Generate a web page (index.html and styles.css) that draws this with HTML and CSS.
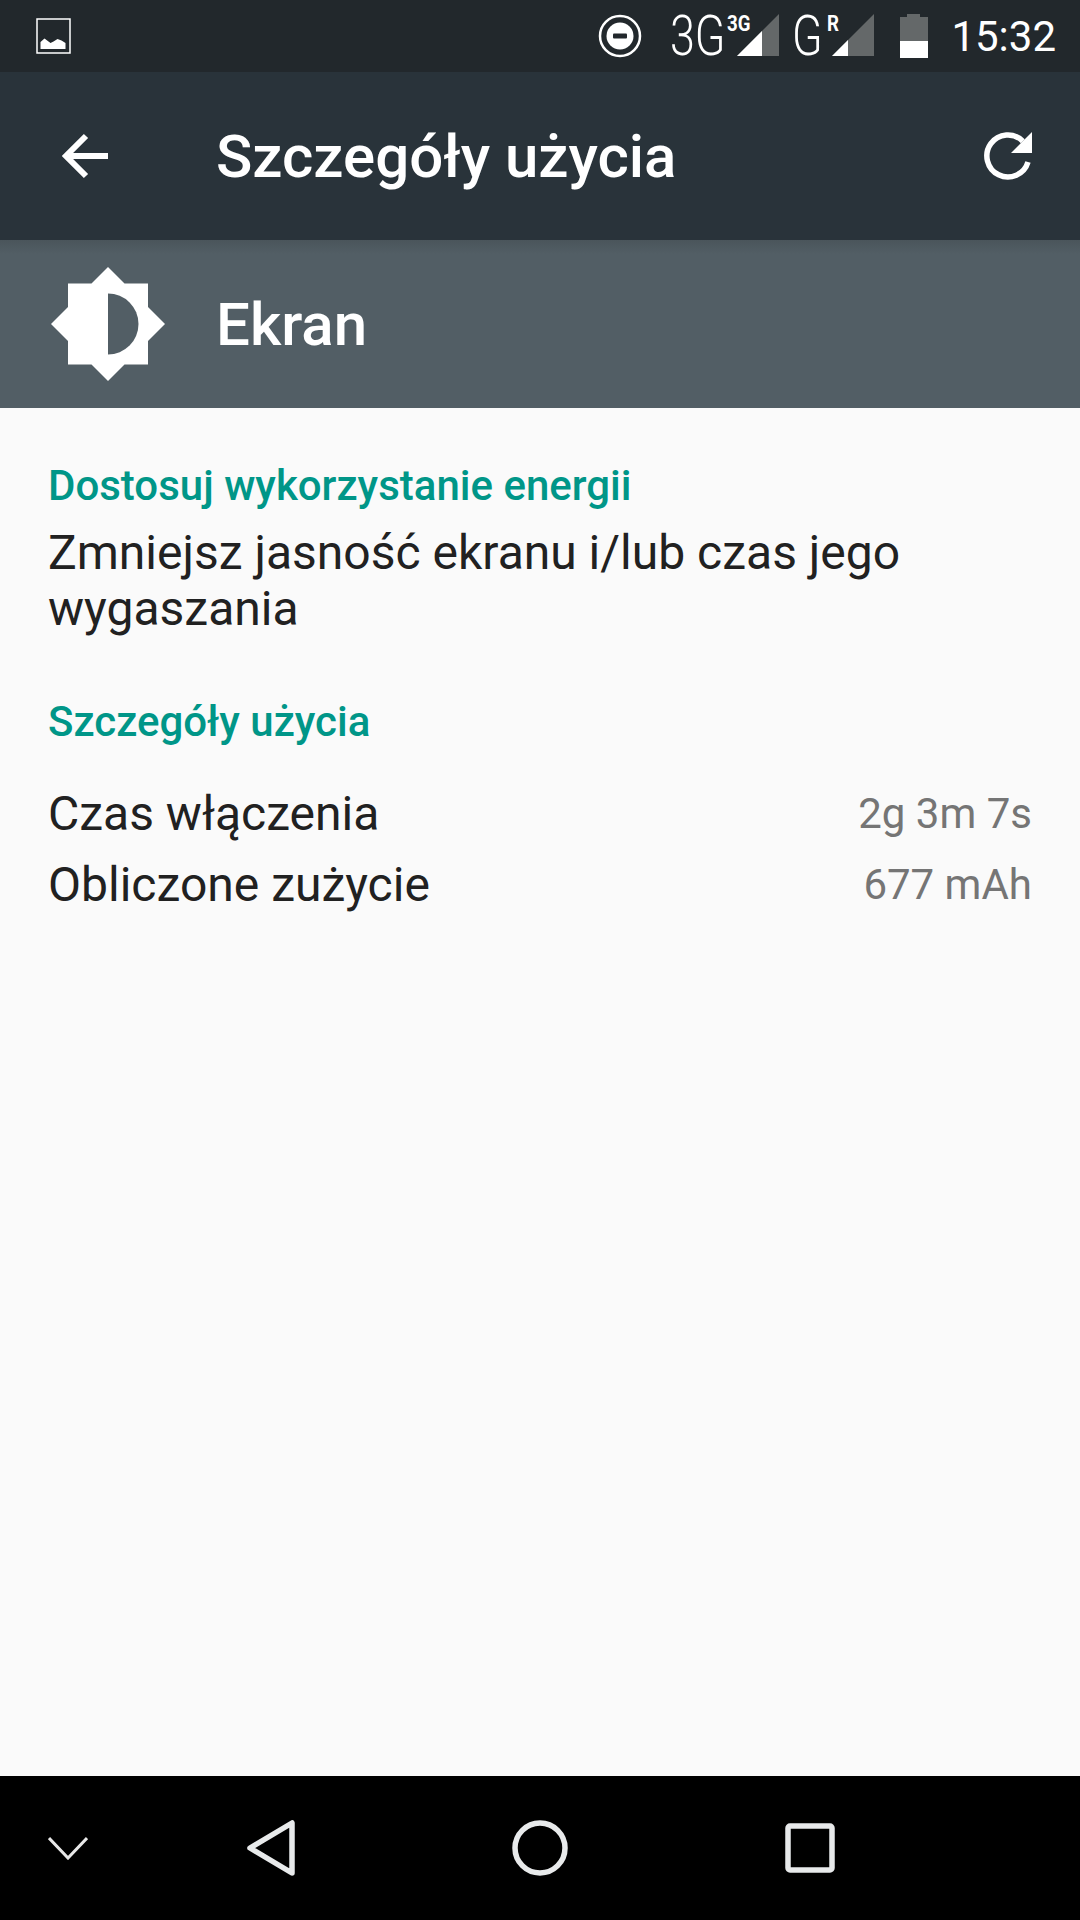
FILE: index.html
```html
<!DOCTYPE html>
<html lang="pl">
<head>
    <meta charset="UTF-8">
    <meta name="viewport" content="width=device-width, initial-scale=1.0">
    <title>Szczegóły użycia</title>
    <link rel="stylesheet" href="styles.css">
</head>
<body>
    <div class="screen">
        <div class="statusbar">
            <svg class="st-image" width="36" height="36" viewBox="0 0 36 36">
                <path d="M1 1h33v34H1z" fill="none" stroke="#fff" stroke-width="1.5"/>
                <path d="M4.500 31V24l4-3.500 6 4.500 3-1.500 4-2.500 4 1.500 4 2.500V31z" fill="#fff"/>
            </svg>
            <div class="st-right">
                <svg class="st-dnd" width="44" height="44" viewBox="0 0 44 44">
                    <circle cx="22" cy="22" r="20" fill="none" stroke="#fff" stroke-width="2.500"/>
                    <circle cx="22" cy="22" r="13.500" fill="#fff"/>
                    <rect x="15" y="19.500" width="14" height="5" rx="1" fill="#22282c"/>
                </svg>
                <span class="net-big net-3g">3G</span>
                <span class="net-small net-small-3g">3G</span>
                <svg class="st-signal st-signal-3g" width="42" height="42" viewBox="0 0 42 42">
                    <path d="M42 0v42H0z" fill="#646869"/>
                    <path d="M25 17v25H0z" fill="#fff"/>
                </svg>
                <span class="net-big net-g">G</span>
                <span class="net-small net-small-r">R</span>
                <svg class="st-signal st-signal-r" width="42" height="42" viewBox="0 0 42 42">
                    <path d="M42 0v42H0z" fill="#646869"/>
                    <path d="M16 26v16H0z" fill="#fff"/>
                </svg>
                <svg class="st-battery" width="30" height="44" viewBox="0 0 30 44">
                    <path d="M8 0h13v3h8v41H1V3h7z" fill="#646869"/>
                    <path d="M1 27h28v17H1z" fill="#fff"/>
                </svg>
                <span class="st-time">15:32</span>
            </div>
        </div>

        <div class="toolbar">
            <svg class="tb-back" width="48" height="48" viewBox="0 0 48 48">
                <path d="M48 24H6M26 4L6 24l20 20" fill="none" stroke="#fff" stroke-width="6"/>
            </svg>
            <h1>Szczegóły użycia</h1>
            <svg class="tb-refresh" width="48" height="48" viewBox="0 0 48 48">
                <path d="M44 30A21 21 0 1 1 38.800 9.200" fill="none" stroke="#fff" stroke-width="5.500"/>
                <path d="M48 0v21H27z" fill="#fff"/>
            </svg>
        </div>

        <div class="app-header">
            <svg class="sun" width="114" height="114" viewBox="0 0 114 114">
                <path d="M57 0l16.500 16.500h23.500v23.500l17 17-17 17v23.500H73.500L57 114 40.500 97.500H17V74L0 57l17-17V16.500h23.500z" fill="#fff"/>
                <path d="M57 26.500a30.500 30.500 0 0 1 0 61z" fill="#525e65"/>
            </svg>
            <h2>Ekran</h2>
        </div>

        <div class="content">
            <section class="tip">
                <h3>Dostosuj wykorzystanie energii</h3>
                <p>Zmniejsz jasność ekranu i/lub czas jego wygaszania</p>
            </section>
            <section class="usage">
                <h3>Szczegóły użycia</h3>
                <div class="row"><span>Czas włączenia</span><span class="value">2g 3m 7s</span></div>
                <div class="row"><span>Obliczone zużycie</span><span class="value">677 mAh</span></div>
            </section>
        </div>

        <div class="navbar">
            <svg class="nav-down" width="40" height="24" viewBox="0 0 40 24">
                <path d="M1 2l19 20L39 2" fill="none" stroke="#e8e8e8" stroke-width="3"/>
            </svg>
            <svg class="nav-back" width="48" height="56" viewBox="0 0 48 56">
                <path d="M45 3v50L3 28z" fill="none" stroke="#e8eaeb" stroke-width="5.500" stroke-linejoin="round"/>
            </svg>
            <svg class="nav-home" width="56" height="56" viewBox="0 0 56 56">
                <circle cx="28" cy="28" r="25" fill="none" stroke="#e8eaeb" stroke-width="5.500"/>
            </svg>
            <svg class="nav-recent" width="50" height="50" viewBox="0 0 50 50">
                <rect x="3" y="3" width="44" height="44" rx="2" fill="none" stroke="#e8eaeb" stroke-width="5.500"/>
            </svg>
        </div>
    </div>
</body>
</html>
```

FILE: styles.css
```css
* {
    box-sizing: border-box;
}

body {
    margin: 0;
    font-family: Roboto, "Liberation Sans", sans-serif;
    background-color: #fafafa;
}

.screen {
    display: flex;
    flex-direction: column;
    width: 1080px;
    height: 1920px;
    overflow: hidden;
}

.statusbar {
    display: flex;
    align-items: center;
    justify-content: space-between;
    height: 72px;
    padding: 0 24px 0 36px;
    background-color: #22282c;
    color: #fff;
}

.st-right {
    display: flex;
    align-items: center;
    height: 44px;
}

.st-dnd {
    margin-right: 28px;
}

.net-big {
    font-size: 56px;
    font-weight: 300;
    line-height: 44px;
    white-space: nowrap;
    transform: scaleX(.8);
    transform-origin: left center;
}

.net-3g {
    width: 54px;
}

.net-g {
    width: 33px;
    margin-left: 13px;
}

.net-small {
    align-self: flex-start;
    font-size: 22px;
    font-weight: 700;
    line-height: 20px;
    white-space: nowrap;
    transform: scaleX(.85);
    transform-origin: left center;
}

.net-small-3g {
    width: 25px;
    margin-left: 3px;
}

.net-small-r {
    width: 11px;
    margin-left: 2px;
}

.st-signal {
    align-self: flex-start;
}

.st-signal-3g {
    margin-left: -15px;
}

.st-signal-r {
    margin-left: -6px;
}

.st-battery {
    margin: 0 22px 0 25px;
}

.st-time {
    font-size: 42px;
}

.toolbar {
    display: flex;
    align-items: center;
    height: 168px;
    padding: 0 48px 0 60px;
    background-color: #29333a;
    color: #fff;
}

.toolbar h1 {
    flex: 1;
    margin: 0 0 0 108px;
    font-size: 60px;
    font-weight: 500;
}

.app-header {
    display: flex;
    align-items: center;
    height: 168px;
    padding-left: 51px;
    background: linear-gradient(#4a555b, #525e65 14px);
    color: #fff;
}

.app-header h2 {
    margin: 0 0 0 51px;
    font-size: 60px;
    font-weight: 500;
}

.content {
    flex: 1;
    padding: 50px 48px 0;
}

.content h3 {
    margin: 0 0 11px;
    color: #009688;
    font-size: 42px;
    font-weight: 500;
    line-height: 56px;
}

.content p {
    margin: 0;
    color: #212121;
    font-size: 48px;
    line-height: 56px;
}

.usage {
    margin-top: 57px;
}

.usage h3 {
    margin-bottom: 28px;
}

.row {
    display: flex;
    justify-content: space-between;
    align-items: center;
    height: 71px;
    color: #212121;
    font-size: 48px;
}

.value {
    color: #757575;
    font-size: 42px;
}

.navbar {
    display: flex;
    align-items: center;
    height: 144px;
    background-color: #000;
}

.nav-down {
    margin-left: 48px;
}

.nav-back {
    margin-left: 159px;
}

.nav-home {
    margin-left: 217px;
}

.nav-recent {
    margin-left: 217px;
}
```
